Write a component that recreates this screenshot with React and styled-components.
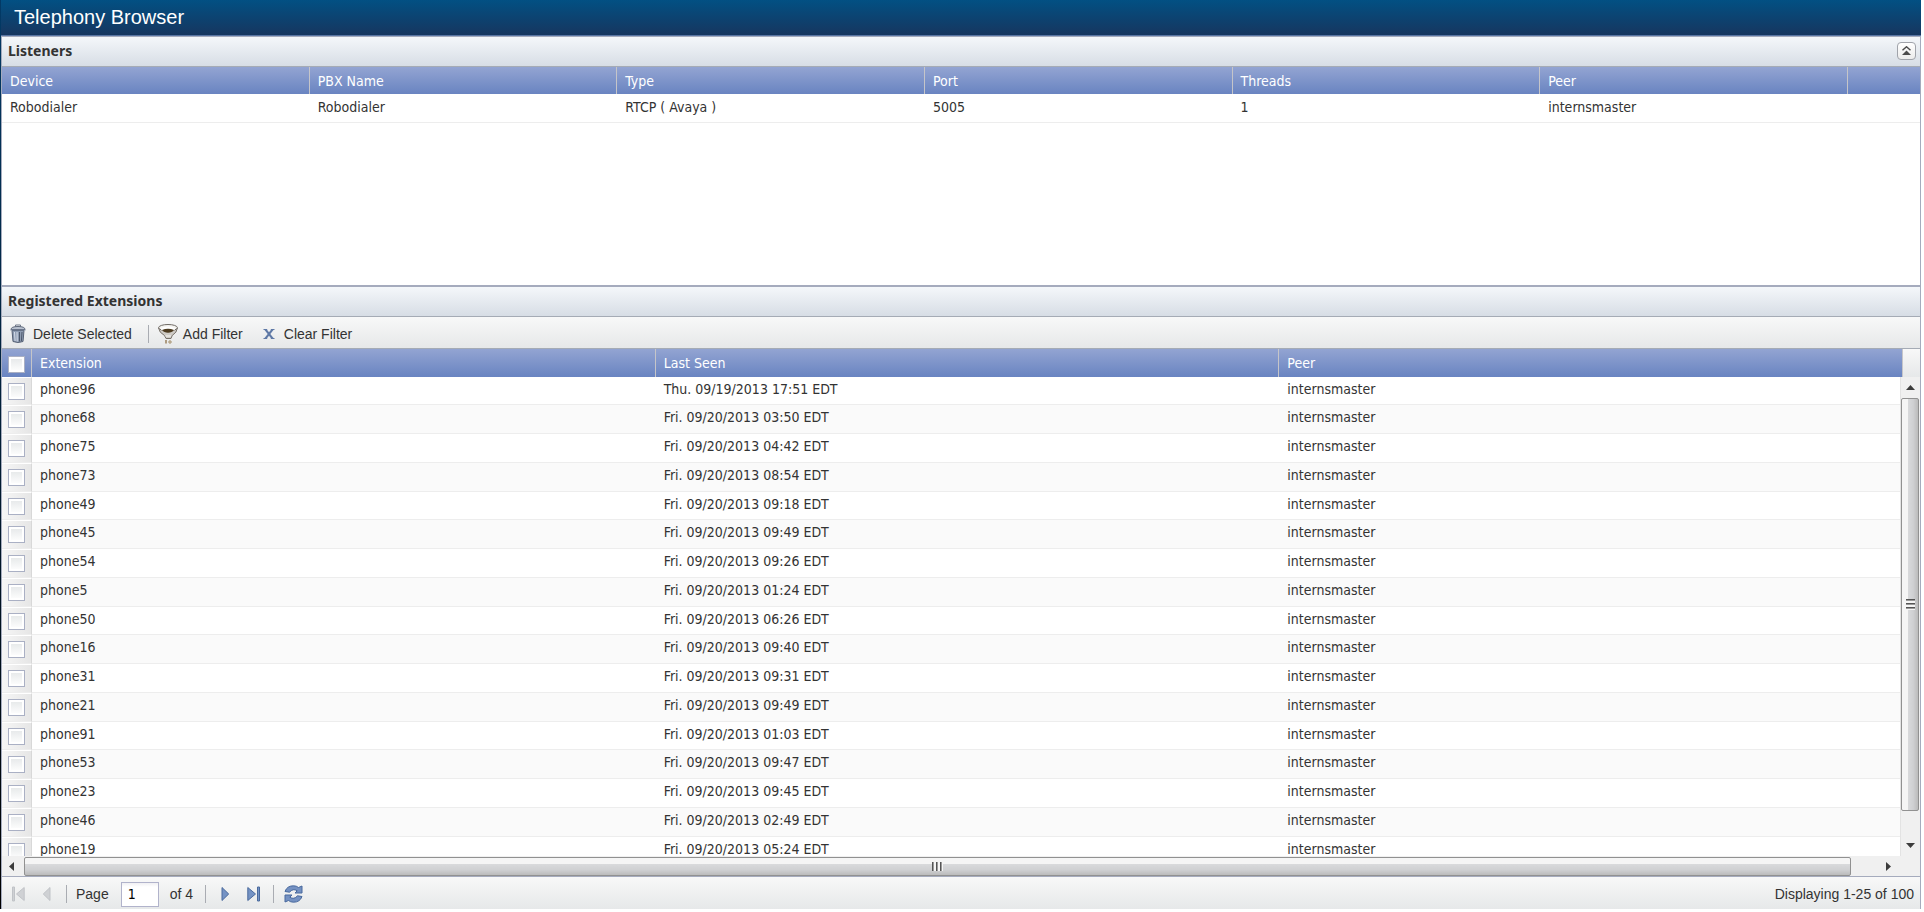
import React, { useState } from "react";
import styled, { createGlobalStyle, css } from "styled-components";

const listenerColumns = ["Device", "PBX Name", "Type", "Port", "Threads", "Peer"];

const listeners = [
  ["Robodialer", "Robodialer", "RTCP ( Avaya )", "5005", "1", "internsmaster"],
];

const extensions = [
  { name: "phone96", seen: "Thu. 09/19/2013 17:51 EDT" },
  { name: "phone68", seen: "Fri. 09/20/2013 03:50 EDT" },
  { name: "phone75", seen: "Fri. 09/20/2013 04:42 EDT" },
  { name: "phone73", seen: "Fri. 09/20/2013 08:54 EDT" },
  { name: "phone49", seen: "Fri. 09/20/2013 09:18 EDT" },
  { name: "phone45", seen: "Fri. 09/20/2013 09:49 EDT" },
  { name: "phone54", seen: "Fri. 09/20/2013 09:26 EDT" },
  { name: "phone5", seen: "Fri. 09/20/2013 01:24 EDT" },
  { name: "phone50", seen: "Fri. 09/20/2013 06:26 EDT" },
  { name: "phone16", seen: "Fri. 09/20/2013 09:40 EDT" },
  { name: "phone31", seen: "Fri. 09/20/2013 09:31 EDT" },
  { name: "phone21", seen: "Fri. 09/20/2013 09:49 EDT" },
  { name: "phone91", seen: "Fri. 09/20/2013 01:03 EDT" },
  { name: "phone53", seen: "Fri. 09/20/2013 09:47 EDT" },
  { name: "phone23", seen: "Fri. 09/20/2013 09:45 EDT" },
  { name: "phone46", seen: "Fri. 09/20/2013 02:49 EDT" },
  { name: "phone19", seen: "Fri. 09/20/2013 05:24 EDT" },
];

const TrashIcon = () => (
  <svg width="16" height="19" viewBox="0 0 16 19" aria-hidden="true">
    <path d="M5.5 2.5V1h5v1.5" fill="none" stroke="#6c7688" />
    <path d="M1 5.5Q1 2.5 8 2.5T15 5.5z" fill="#b9c1cf" stroke="#5f697b" />
    <path d="M2 6.500h12l-1 11Q8 19.500 3 17.500z" fill="#8d9bb1" stroke="#566175" />
    <path d="M4.500 8l.6 9M7 8l.2 9.500" stroke="#d8deea" />
    <path d="M9.500 8v9.500M12 8l-.6 9" stroke="#4c576a" />
    <path d="M.5 6h15" stroke="#77839a" />
  </svg>
);

const FunnelIcon = () => (
  <svg width="20" height="20" viewBox="0 0 20 20" aria-hidden="true">
    <path d="M.6 4Q1 8.500 6.500 11.500L8 14.500h5l1.200-3Q19 8.500 19.400 4z" fill="#cfccc7" stroke="#77716a" />
    <ellipse cx="10" cy="3.700" rx="9.400" ry="3.200" fill="#f4f3ef" stroke="#6f6a65" />
    <ellipse cx="10" cy="5" rx="7" ry="2.600" fill="#fff" />
    <path d="M4 6Q10 3.500 16 6 14 8.800 10 8.800T4 6z" fill="#4c3b20" />
    <path d="M7.500 12h5.500" stroke="#f8f8f5" />
    <path d="M8 16v3.500" stroke="#98815d" strokeWidth="1.500" />
    <circle cx="12" cy="18" r="1.200" fill="none" stroke="#a18a62" />
  </svg>
);

const ClearIcon = () => (
  <svg width="12" height="12" viewBox="0 0 12 12" aria-hidden="true">
    <path d="M.5 1h3.700v1L6 4.300 7.800 2V1h3.700v1h-1L7.300 6l3.200 4h1v1H7.800v-1L6 7.700 4.200 10v1H.5v-1h1l3.200-4-3.200-4h-1z" fill="#5f79a6" />
  </svg>
);

const CollapseIcon = () => (
  <svg width="9" height="9" viewBox="0 0 9 9" aria-hidden="true">
    <path d="M.5 4.200L4.500.8l4 3.400" fill="none" stroke="#4c4c4c" strokeWidth="1.500" />
    <path d="M0 9h9L4.500 4.500z" fill="#4c4c4c" />
  </svg>
);

const PageIcon = ({ flip, bar, muted }) => {
  const fill = muted ? "#cfd1d4" : "#7593c4";
  const stroke = muted ? "#c0c3c7" : "#4a6a9d";
  return (
    <svg width="14" height="16" viewBox="0 0 14 16" aria-hidden="true">
      <g transform={flip ? "matrix(-1 0 0 1 14 0)" : undefined} fill={fill} stroke={stroke}>
        <path d={bar ? "M.8 1.500v13L8.500 8z" : "M4 1.500v13L10.700 8z"} />
        {bar && <path d="M10.500 1h2v14h-2z" />}
      </g>
    </svg>
  );
};

const RefreshIcon = () => (
  <svg width="19" height="18" viewBox="0 0 19 18" aria-hidden="true">
    <g fill="#7491c2" stroke="#48699d">
      <path d="M1 6.500Q3 .8 9.500.8q3 0 5 1.700L18 1v7h-7l2.200-2.200Q9 3 5.500 7.200z" />
      <path d="M18 11.500q-2 5.700-8.500 5.700-3 0-5-1.700L1 17v-7h7l-2.200 2.200Q10 15 13.500 10.800z" />
    </g>
  </svg>
);

const arrowPaths = {
  up: "M0 7L4.500 2 9 7z",
  down: "M0 2h9L4.500 7z",
  left: "M7 0v9L2 4.500z",
  right: "M2 0v9l5-4.500z",
};

const ScrollArrow = ({ dir }) => (
  <svg width="9" height="9" viewBox="0 0 9 9" aria-hidden="true">
    <path d={arrowPaths[dir]} fill="#3c3c3c" />
  </svg>
);

const App = () => {
  const [collapsed, setCollapsed] = useState(false);
  const [selected, setSelected] = useState([]);
  const [page, setPage] = useState("1");

  const toggle = (name) => {
    setSelected(
      selected.includes(name) ? selected.filter((n) => n !== name) : [...selected, name]
    );
  };

  const toggleAll = (e) => {
    setSelected(e.target.checked ? extensions.map((ext) => ext.name) : []);
  };

  return (
    <>
      <GlobalStyle />
      <Wrapper>
        <TitleBar>Telephony Browser</TitleBar>

        <ListenersPanel $collapsed={collapsed}>
          <PanelHeader>
            <PanelTitle>Listeners</PanelTitle>
            <CollapseButton aria-label="Collapse" onClick={() => setCollapsed(!collapsed)}>
              <CollapseIcon />
            </CollapseButton>
          </PanelHeader>
          <Grid>
            <colgroup>
              {listenerColumns.map((c) => <ListenerCol key={c} />)}
              <col />
            </colgroup>
            <thead>
              <tr>
                {listenerColumns.map((c) => <HeadCell key={c}>{c}</HeadCell>)}
                <HeadCell $last />
              </tr>
            </thead>
            <tbody>
              {listeners.map((row) => (
                <ListenerRow key={row[0]}>
                  {row.map((value, i) => <Cell key={i}>{value}</Cell>)}
                  <Cell />
                </ListenerRow>
              ))}
            </tbody>
          </Grid>
        </ListenersPanel>

        <ExtensionsPanel>
          <PanelHeader>
            <PanelTitle>Registered Extensions</PanelTitle>
          </PanelHeader>

          <Toolbar>
            <ToolButton><IconBox><TrashIcon /></IconBox>Delete Selected</ToolButton>
            <Separator />
            <ToolButton><IconBox><FunnelIcon /></IconBox>Add Filter</ToolButton>
            <ToolButton><IconBox><ClearIcon /></IconBox>Clear Filter</ToolButton>
          </Toolbar>

          <GridArea>
            <GridClip>
              <Grid>
                <colgroup>
                  <CheckCol />
                  <col />
                  <col />
                  <col />
                </colgroup>
                <thead>
                  <tr>
                    <CheckHead>
                      <CheckBox
                        type="checkbox"
                        aria-label="Select all"
                        checked={selected.length === extensions.length}
                        onChange={toggleAll}
                      />
                    </CheckHead>
                    <HeadCell $tall>Extension</HeadCell>
                    <HeadCell $tall>Last Seen</HeadCell>
                    <HeadCell $tall>Peer</HeadCell>
                  </tr>
                </thead>
                <tbody>
                  {extensions.map((ext) => (
                    <ExtensionRow key={ext.name}>
                      <CheckCell>
                        <CheckBox
                          type="checkbox"
                          aria-label={ext.name}
                          checked={selected.includes(ext.name)}
                          onChange={() => toggle(ext.name)}
                        />
                      </CheckCell>
                      <Cell>{ext.name}</Cell>
                      <Cell>{ext.seen}</Cell>
                      <Cell>internsmaster</Cell>
                    </ExtensionRow>
                  ))}
                </tbody>
              </Grid>
            </GridClip>
            <SideColumn>
              <HeaderFill />
              <VerticalBar>
                <ArrowBox><ScrollArrow dir="up" /></ArrowBox>
                <VerticalThumb><Grip $vertical /></VerticalThumb>
                <VerticalRest />
                <ArrowBox><ScrollArrow dir="down" /></ArrowBox>
              </VerticalBar>
            </SideColumn>
          </GridArea>

          <HorizontalBar>
            <ArrowBox><ScrollArrow dir="left" /></ArrowBox>
            <HorizontalThumb><Grip /></HorizontalThumb>
            <HorizontalRest />
            <ArrowBox><ScrollArrow dir="right" /></ArrowBox>
            <Corner />
          </HorizontalBar>

          <Pager>
            <PageButton disabled aria-label="First page"><PageIcon flip bar muted /></PageButton>
            <PageButton disabled aria-label="Previous page"><PageIcon flip muted /></PageButton>
            <Separator />
            <PageLabel>
              Page
              <PageInput value={page} onChange={(e) => setPage(e.target.value)} />
            </PageLabel>
            <PageCount>of 4</PageCount>
            <Separator />
            <PageButton aria-label="Next page"><PageIcon /></PageButton>
            <PageButton aria-label="Last page"><PageIcon bar /></PageButton>
            <Separator />
            <PageButton aria-label="Refresh"><RefreshIcon /></PageButton>
            <PageInfo>Displaying 1-25 of 100</PageInfo>
          </Pager>
        </ExtensionsPanel>
      </Wrapper>
    </>
  );
};

const GlobalStyle = createGlobalStyle`
  * {
    box-sizing: border-box;
  }
  body {
    margin: 0;
    background: #fff;
    color: #333;
    font-family: "Liberation Sans", Arial, sans-serif;
    font-size: 14px;
  }
`;

const gridFont = `"DejaVu Sans Condensed", Tahoma, sans-serif`;

const Wrapper = styled.div`
  display: flex;
  flex-direction: column;
  height: calc(100vh - 3px);
  margin-right: 3px;
  padding-left: 1px;
  background: linear-gradient(#033a66, #000);
`;

const TitleBar = styled.header`
  height: 36px;
  padding-left: 13px;
  border-bottom: 1px solid #5875a3;
  background: linear-gradient(#025083, #16365f);
  color: #fff;
  font-size: 20px;
  line-height: 34px;
`;

const panel = css`
  border: 1px solid #a5abbd;
  background: #fff;
  overflow: hidden;
`;

const ListenersPanel = styled.section`
  ${panel}
  flex: none;
  height: ${(props) => (props.$collapsed ? "31px" : "250px")};
`;

const ExtensionsPanel = styled.section`
  ${panel}
  display: flex;
  flex-direction: column;
  flex: 1;
  min-height: 0;
  border-bottom: 0;
`;

const PanelHeader = styled.div`
  display: flex;
  flex: none;
  align-items: center;
  justify-content: space-between;
  height: 30px;
  padding: 0 4px 2px 6px;
  border-bottom: 1px solid #a5abb5;
  background: linear-gradient(#f4f7fa, #d7dde5);
`;

const PanelTitle = styled.h2`
  margin: 0;
  font: bold 14px/18px "Noto Sans", Tahoma, sans-serif;
`;

const CollapseButton = styled.button`
  display: flex;
  align-items: center;
  justify-content: center;
  width: 19px;
  height: 18px;
  padding: 0;
  border: 1px solid #a0a3aa;
  border-radius: 4px;
  background: linear-gradient(#fff, #ececec);
`;

const Grid = styled.table`
  width: 100%;
  border-collapse: separate;
  border-spacing: 0;
  table-layout: fixed;
  font: 14px/18px ${gridFont};
`;

const ListenerCol = styled.col`
  width: 16.04%;
`;

const CheckCol = styled.col`
  width: 30px;
`;

const HeadCell = styled.th`
  height: ${(props) => (props.$tall ? "28px" : "27px")};
  padding: 0 8px;
  border-right: ${(props) => (props.$last ? "0" : "1px solid #c5c5c9")};
  background: linear-gradient(#93a4d2, #6984c1);
  color: #fff;
  font-weight: normal;
  text-align: left;
`;

const CheckHead = styled(HeadCell)`
  height: 28px;
  padding: 2px 6px 0;
`;

const Cell = styled.td`
  padding: 0 8px;
  border-bottom: 1px solid #ededed;
  white-space: nowrap;
`;

const CheckCell = styled.td`
  padding: 0 6px;
  border-top: 1px solid #fff;
  border-right: 1px solid #d8d8d8;
  border-bottom: 1px solid #ededed;
  background: linear-gradient(to right, #f6f6f6, #e6e6e6);
`;

const ListenerRow = styled.tr`
  height: 29px;

  ${Cell} {
    padding-bottom: 2px;
  }
`;

const ExtensionRow = styled.tr`
  height: 29px;
  background: #fff;

  &:nth-child(even) {
    background: #fafafa;
  }
  &:nth-child(4n + 1) {
    height: 28px;
  }
  ${Cell} {
    padding-bottom: 4px;
  }
`;

const CheckBox = styled.input`
  display: block;
  appearance: none;
  width: 17px;
  height: 17px;
  margin: 0;
  border: 1px solid #aab0c4;
  background: linear-gradient(#e4e7e8, #fff);
  box-shadow: inset 0 0 0 2px #fff;

  &:checked {
    background: #6984c1;
  }
`;

const barFill = "linear-gradient(#f8f8f8, #e6e8e9)";

const Toolbar = styled.div`
  display: flex;
  flex: none;
  align-items: center;
  height: 32px;
  padding: 2px 6px 0;
  border-bottom: 1px solid #a5abb5;
  background: ${barFill};
`;

const ToolButton = styled.button`
  display: flex;
  align-items: center;
  gap: 5px;
  margin-right: 16px;
  padding: 0;
  border: 0;
  background: none;
  color: #333;
  font: inherit;
`;

const IconBox = styled.span`
  display: flex;
  align-items: center;
  justify-content: center;
  width: 20px;
  height: 20px;
`;

const Separator = styled.span`
  width: 1px;
  height: 18px;
  margin-right: 9px;
  background: #a9acb2;
`;

const GridArea = styled.div`
  display: flex;
  flex: 1;
  min-height: 0;
`;

const GridClip = styled.div`
  flex: 1;
  min-width: 0;
  overflow: hidden;
`;

const SideColumn = styled.div`
  display: flex;
  flex-direction: column;
  flex: none;
  width: 17px;
`;

const HeaderFill = styled.div`
  height: 28px;
  background: ${barFill};
`;

const ArrowBox = styled.span`
  display: flex;
  flex: none;
  align-items: center;
  justify-content: center;
  width: 19px;
  height: 21px;
`;

const VerticalBar = styled.div`
  display: flex;
  flex: 1;
  flex-direction: column;
  min-height: 0;
  margin-left: -3px;
  padding-right: 1px;
  border-left: 1px solid #e3e3e3;
  background: #f0f0f0;

  ${ArrowBox} {
    width: 100%;
  }
`;

const VerticalThumb = styled.div`
  display: flex;
  flex: 413;
  align-items: center;
  justify-content: center;
  border: 1px solid #919191;
  border-radius: 2px;
  background: linear-gradient(to right, #f5f5f5 35%, #d9dadc 36%, #cfd0d2 70%, #bbb);
`;

const VerticalRest = styled.div`
  flex: 24;
`;

const Grip = styled.span`
  width: ${(props) => (props.$vertical ? "9px" : "11px")};
  height: ${(props) => (props.$vertical ? "11px" : "9px")};
  background: repeating-linear-gradient(
    ${(props) => (props.$vertical ? "to bottom" : "to right")},
    #555 0 1px,
    #999 1px 2px,
    #f5f5f5 2px 4px
  );
`;

const HorizontalBar = styled.div`
  display: flex;
  flex: none;
  align-items: center;
  height: 21px;
  border-bottom: 1px solid #a5abbd;
  background: #f0f0f0;
`;

const HorizontalThumb = styled.div`
  display: flex;
  flex: 1826;
  align-items: center;
  justify-content: center;
  height: 19px;
  margin-left: 3px;
  border: 1px solid #919191;
  border-radius: 2px;
  background: linear-gradient(#f5f5f5 35%, #d9dadc 36%, #cfd0d2 70%, #bbb);
`;

const HorizontalRest = styled.div`
  flex: 28;
`;

const Corner = styled.div`
  width: 22px;
`;

const Pager = styled.footer`
  display: flex;
  flex: none;
  align-items: center;
  height: 32px;
  padding: 2px 6px 0;
  background: ${barFill};
`;

const PageButton = styled.button`
  display: flex;
  align-items: center;
  justify-content: center;
  width: 20px;
  height: 20px;
  margin-right: 9px;
  padding: 0;
  border: 0;
  background: none;
`;

const PageLabel = styled.label`
  display: flex;
  align-items: center;
  gap: 12px;
  margin-right: 11px;
`;

const PageInput = styled.input`
  width: 38px;
  height: 25px;
  padding: 0 6px;
  border: 1px solid #b1b3cb;
  background: linear-gradient(#f0f0f3, #fff 4px);
  color: #000;
  font: 14px ${gridFont};
`;

const PageCount = styled.span`
  margin-right: 12px;
`;

const PageInfo = styled.span`
  margin-left: auto;
`;

export default App;
